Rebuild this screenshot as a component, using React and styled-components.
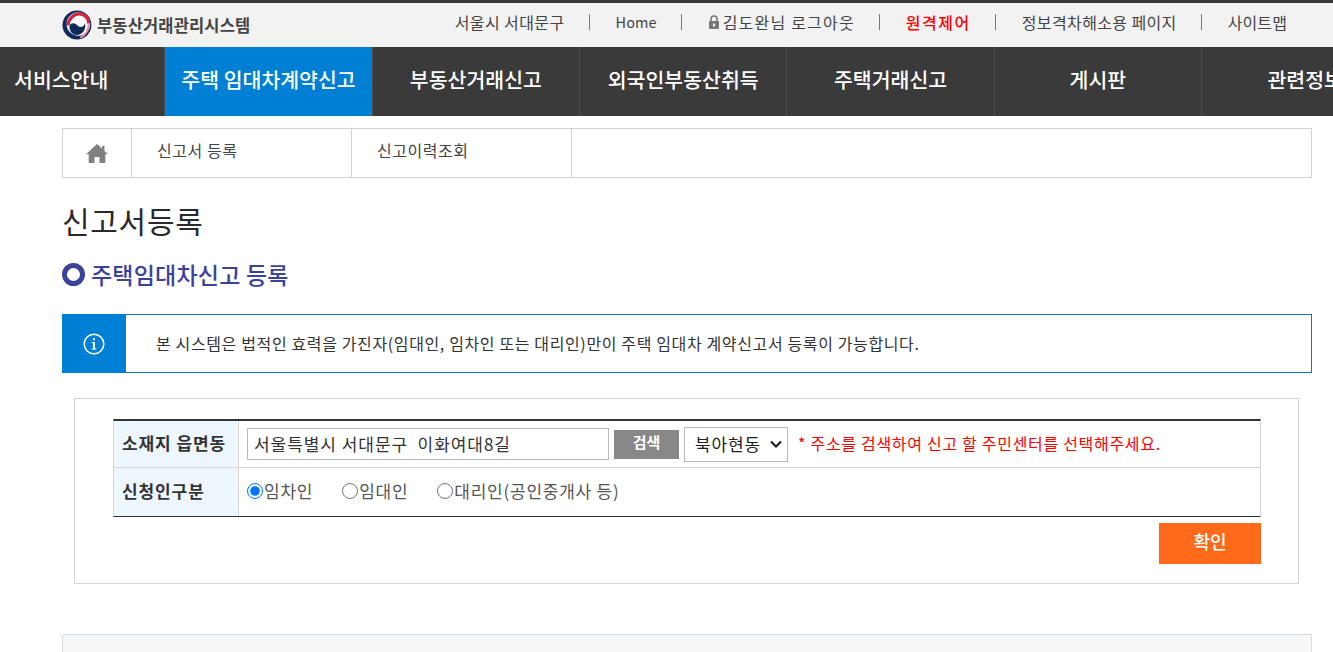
import React from "react";
import styled, { createGlobalStyle } from "styled-components";

const fontStack = `"Noto Sans CJK KR", "Noto Sans", sans-serif`;

const chevron = encodeURIComponent(
  `<svg xmlns="http://www.w3.org/2000/svg" width="12" height="8" viewBox="0 0 12 8"><path d="M1 1.5l5 5 5-5" fill="none" stroke="#222" stroke-width="2.2"/></svg>`
);

const GlobalStyle = createGlobalStyle`
  html, body {
    margin: 0;
    padding: 0;
    background: #fff;
    color: #333;
    font-family: ${fontStack};
    overflow: hidden;
  }
  * { box-sizing: border-box; }
`;

const Root = styled.div`
  width: 1333px;
  height: 652px;
  overflow: hidden;
`;

const UtilBar = styled.div`
  height: 47px;
  background: #f2f2f2;
  border-top: 3px solid #3a3a3a;
`;

const UtilInner = styled.div`
  width: 1250px;
  height: 44px;
  margin-left: 62px;
  display: flex;
  align-items: center;
  justify-content: space-between;
`;

const Logo = styled.a`
  display: flex;
  align-items: center;
  gap: 5px;
  font-size: 16.5px;
  font-weight: 700;
  letter-spacing: 0.15px;
  color: #444;
  margin-top: -1px;
`;

const UtilList = styled.ul`
  display: flex;
  align-items: center;
  list-style: none;
  margin: 0 0 6px;
  padding: 0;
`;

const UtilItem = styled.li`
  display: flex;
  align-items: center;
  gap: 3px;
  height: 16px;
  padding: 0 ${(p) => (p.$last ? "25px" : "24px")} 0 26px;
  font-size: ${(p) => p.$size || "16px"};
  line-height: 16px;
  letter-spacing: ${(p) => p.$spacing || "0.1px"};
  font-weight: ${(p) => (p.$alert ? 500 : 400)};
  color: ${(p) => (p.$alert ? "#ff0000" : "#444")};
  border-right: ${(p) => (p.$last ? "none" : "1px solid #777")};
`;

const NavBar = styled.nav`
  height: 69px;
  background: #3a3a3a;
  overflow: hidden;
  display: flex;
`;

const NavItem = styled.a`
  flex: 0 0 207.35px;
  height: 69px;
  display: flex;
  align-items: center;
  justify-content: center;
  padding-bottom: 6px;
  font-size: 20.5px;
  font-weight: 500;
  white-space: nowrap;
  color: #fff;
  background: ${(p) => (p.$active ? "#0080d4" : "transparent")};
  border-right: 1px solid #4c4c4c;
  &:first-child {
    margin-left: -42px;
  }
`;

const Content = styled.main`
  width: 1250px;
  margin: 12px 0 0 62px;
`;

const TabRow = styled.div`
  height: 50px;
  display: flex;
  border: 1px solid #d2d2d2;
`;

const HomeCell = styled.div`
  flex: 0 0 69px;
  display: flex;
  align-items: center;
  justify-content: center;
  border-right: 1px solid #d2d2d2;
`;

const TabCell = styled.a`
  flex: 0 0 220px;
  padding-left: 25px;
  padding-bottom: 6px;
  display: flex;
  align-items: center;
  font-size: 16px;
  letter-spacing: 0.55px;
  color: #444;
  border-right: 1px solid #d2d2d2;
`;

const PageTitle = styled.h1`
  margin: 22px 0 0;
  font-size: 30px;
  line-height: 40px;
  font-weight: 400;
  letter-spacing: 0.7px;
  color: #2a2a2a;
`;

const SectionTitle = styled.h2`
  display: flex;
  align-items: center;
  gap: 6px;
  margin: 18px 0 0;
  height: 32px;
  font-size: 23px;
  line-height: 32px;
  font-weight: 500;
  letter-spacing: 0.2px;
  color: #3a429c;
`;

const Ring = styled.span`
  width: 23px;
  height: 23px;
  border-radius: 50%;
  border: 5px solid #3a429c;
  background: #fff;
`;

const Notice = styled.div`
  height: 59px;
  margin-top: 24px;
  display: flex;
  border: 1px solid #0a78c8;
`;

const NoticeIcon = styled.div`
  flex: 0 0 64px;
  margin: -1px 0 -1px -1px;
  display: flex;
  align-items: center;
  justify-content: center;
  background: #0080d4;
`;

const NoticeText = styled.p`
  margin: 0;
  padding: 0 0 2px 30px;
  display: flex;
  align-items: center;
  font-size: 16px;
  letter-spacing: 0.63px;
  color: #333;
`;

const FormPanel = styled.section`
  width: 1225px;
  height: 186px;
  margin: 25px 0 0 12px;
  padding: 20px 37px 0 38px;
  border: 1px solid #d5d5d5;
`;

const FormTable = styled.div`
  border-top: 2px solid #333;
  border-bottom: 1px solid #333;
  border-left: 1px solid #d5d5d5;
  border-right: 1px solid #d5d5d5;
`;

const FormRow = styled.div`
  display: flex;
  height: ${(p) => p.$height}px;
  & + & {
    border-top: 1px solid #d5d5d5;
  }
`;

const RowLabel = styled.div`
  flex: 0 0 125px;
  padding: 0 0 3px 8px;
  display: flex;
  align-items: center;
  background: #eef6fd;
  border-right: 1px solid #d5d5d5;
  font-size: 17px;
  font-weight: 700;
  letter-spacing: 0.9px;
  color: #333;
`;

const RowBody = styled.div`
  flex: 1;
  padding-left: 8px;
  display: flex;
  align-items: center;
`;

const AddressInput = styled.input`
  width: 362px;
  height: 32px;
  padding: 0 6px 2px;
  border: 1px solid #bbb;
  outline: none;
  font-family: ${fontStack};
  font-size: 17px;
  letter-spacing: 0.95px;
  color: #333;
  background: #fff;
`;

const SearchButton = styled.button`
  width: 65px;
  height: 29px;
  margin-left: 5px;
  padding: 0 0 5px;
  border: none;
  background: #888;
  color: #fff;
  font-family: ${fontStack};
  font-size: 15px;
  font-weight: 700;
`;

const DongSelect = styled.select`
  width: 104px;
  height: 35px;
  margin-left: 5px;
  padding: 0 0 2px 10px;
  border: 1px solid #bbb;
  border-radius: 0;
  appearance: none;
  background: #fff url("data:image/svg+xml,${chevron}") no-repeat right 5px center;
  font-family: ${fontStack};
  font-size: 17px;
  letter-spacing: 0.9px;
  color: #222;
`;

const Hint = styled.span`
  margin-left: 10px;
  padding-bottom: 2px;
  font-size: 16px;
  letter-spacing: 0.7px;
  color: #ff0000;
`;

const RadioLabel = styled.label`
  display: flex;
  align-items: center;
  margin-right: 29px;
  padding-bottom: 4px;
  font-size: 17px;
  letter-spacing: 0.75px;
  color: #555;
`;

const Radio = styled.input`
  width: 16px;
  height: 16px;
  margin: 2px 1px 0 0;
`;

const Actions = styled.div`
  display: flex;
  justify-content: flex-end;
  margin-top: 6px;
`;

const ConfirmButton = styled.button`
  width: 102px;
  height: 41px;
  padding: 0 0 5px;
  border: none;
  background: #ff6a1a;
  color: #fff;
  font-family: ${fontStack};
  font-size: 18px;
  font-weight: 500;
`;

const BottomBox = styled.div`
  height: 60px;
  margin-top: 50px;
  background: #f6f7f9;
  border: 1px solid #dcdcdc;
`;

const NAV_ITEMS = [
  "서비스안내",
  "주택 임대차계약신고",
  "부동산거래신고",
  "외국인부동산취득",
  "주택거래신고",
  "게시판",
  "관련정보",
];

const TaegeukLogo = () => (
  <svg width="30" height="30" viewBox="0 0 30 30" aria-hidden="true">
    <circle cx="15" cy="15" r="14.5" fill="#0c2a5c" />
    <circle cx="16.4" cy="14" r="11.8" fill="#fff" />
    <path d="M20 .9A14.5 14.5 0 0 1 26 24.5L30 30V0z" fill="#f2f2f2" />
    <path d="M6 15.5C6.4 8.6 12 3.7 17.4 3.9c5.6.2 9.4 4.6 9.3 9.8" fill="none" stroke="#cf2340" strokeWidth="3.2" />
    <path d="M26.8 13c.5 6-2.6 12-8.6 14.8" fill="none" stroke="#f08a9c" strokeWidth="2" />
    <path d="M7.5 16c1.500-4 5.500-3 8-.500s6.500 2 7.500-2.500c1.500 7-3 12-8 12s-8-4.500-7.500-9z" fill="#0c2a5c" />
  </svg>
);

const LockIcon = () => (
  <svg width="12" height="14" viewBox="0 0 12 14" aria-hidden="true">
    <path d="M3 6V4a3 3 0 0 1 6 0v2" fill="none" stroke="#777" strokeWidth="1.6" />
    <rect x="1" y="6" width="10" height="8" rx="1" fill="#777" />
    <rect x="5" y="8.5" width="2" height="3" fill="#f2f2f2" />
  </svg>
);

const HomeIcon = () => (
  <svg width="22" height="19" viewBox="0 0 22 19" aria-hidden="true">
    <path d="M11 0l5 4.500V2h2.500v5L22 10.300h-2.700V19h-5.800v-6h-5v6H2.700v-8.700H0z" fill="#808080" />
  </svg>
);

const InfoIcon = () => (
  <svg width="22" height="22" viewBox="0 0 22 22" aria-hidden="true">
    <circle cx="11" cy="11" r="9.8" fill="none" stroke="#fff" strokeWidth="1.5" />
    <rect x="10" y="9" width="2" height="7.500" fill="#fff" />
    <rect x="10" y="5.300" width="2" height="2" fill="#fff" />
    <rect x="8.600" y="9" width="2" height="1.100" fill="#fff" />
    <rect x="8.600" y="15.400" width="4.800" height="1.100" fill="#fff" />
  </svg>
);

export default function App() {
  return (
    <Root>
      <GlobalStyle />
      <UtilBar>
        <UtilInner>
          <Logo>
            <TaegeukLogo />
            부동산거래관리시스템
          </Logo>
          <UtilList>
            <UtilItem $spacing="0.4px">서울시 서대문구</UtilItem>
            <UtilItem $size="14.5px">Home</UtilItem>
            <UtilItem $spacing="1.2px">
              <LockIcon />
              김도완님 로그아웃
            </UtilItem>
            <UtilItem $alert $spacing="1.5px">원격제어</UtilItem>
            <UtilItem $spacing="0.38px">정보격차해소용 페이지</UtilItem>
            <UtilItem $last>사이트맵</UtilItem>
          </UtilList>
        </UtilInner>
      </UtilBar>

      <NavBar>
        {NAV_ITEMS.map((item, i) => (
          <NavItem key={item} $active={i === 1}>
            {item}
          </NavItem>
        ))}
      </NavBar>

      <Content>
        <TabRow>
          <HomeCell>
            <HomeIcon />
          </HomeCell>
          <TabCell>신고서 등록</TabCell>
          <TabCell>신고이력조회</TabCell>
        </TabRow>

        <PageTitle>신고서등록</PageTitle>
        <SectionTitle>
          <Ring />
          주택임대차신고 등록
        </SectionTitle>

        <Notice>
          <NoticeIcon>
            <InfoIcon />
          </NoticeIcon>
          <NoticeText>
            본 시스템은 법적인 효력을 가진자(임대인, 임차인 또는 대리인)만이 주택 임대차 계약신고서 등록이 가능합니다.
          </NoticeText>
        </Notice>

        <FormPanel>
          <FormTable>
            <FormRow $height={46}>
              <RowLabel>소재지 읍면동</RowLabel>
              <RowBody>
                <AddressInput defaultValue="서울특별시 서대문구  이화여대8길" />
                <SearchButton type="button">검색</SearchButton>
                <DongSelect defaultValue="북아현동">
                  <option>북아현동</option>
                </DongSelect>
                <Hint>* 주소를 검색하여 신고 할 주민센터를 선택해주세요.</Hint>
              </RowBody>
            </FormRow>
            <FormRow $height={49}>
              <RowLabel>신청인구분</RowLabel>
              <RowBody>
                <RadioLabel>
                  <Radio type="radio" name="applicant" defaultChecked />
                  임차인
                </RadioLabel>
                <RadioLabel>
                  <Radio type="radio" name="applicant" />
                  임대인
                </RadioLabel>
                <RadioLabel>
                  <Radio type="radio" name="applicant" />
                  대리인(공인중개사 등)
                </RadioLabel>
              </RowBody>
            </FormRow>
          </FormTable>
          <Actions>
            <ConfirmButton type="button">확인</ConfirmButton>
          </Actions>
        </FormPanel>

        <BottomBox />
      </Content>
    </Root>
  );
}
